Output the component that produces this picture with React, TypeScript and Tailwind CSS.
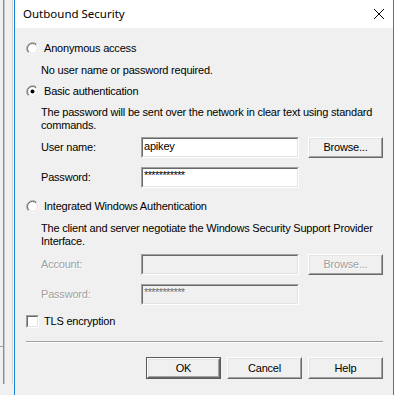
import type { ReactNode } from 'react';

const sans = "font-['Liberation_Sans',Arial,sans-serif]";
const disabledText = 'text-[#a0a0a0] [text-shadow:1px_1px_0_#fff]';

function RadioMark({ checked }: { checked?: boolean }) {
  return (
    <svg width="13" height="13" viewBox="0 0 13 13" className="shrink-0" aria-hidden>
      <circle cx="6.5" cy="6.5" r="4.6" fill="#fff" />
      <path d="M2.26 10.74A6 6 0 0 1 10.74 2.26" fill="none" stroke="#a0a0a0" />
      <path d="M10.74 2.26A6 6 0 0 1 2.26 10.74" fill="none" stroke="#fff" />
      <path d="M2.96 10.04A5 5 0 0 1 10.04 2.96" fill="none" stroke="#696969" />
      <path d="M10.04 2.96A5 5 0 0 1 2.96 10.04" fill="none" stroke="#e3e3e3" />
      {checked && <circle cx="6.5" cy="6.5" r="2" fill="#000" />}
    </svg>
  );
}

function Radio({ label, checked, className }: { label: string; checked?: boolean; className?: string }) {
  return (
    <div className={`flex h-[14px] items-center gap-[5px] ${className ?? ''}`}>
      <RadioMark checked={checked} />
      <span>{label}</span>
    </div>
  );
}

function CheckBox({ label, className }: { label: string; className?: string }) {
  return (
    <div className={`flex h-[14px] items-center gap-[5px] ${className ?? ''}`}>
      <span className="h-[13px] w-[13px] shrink-0 border border-t-[#a0a0a0] border-l-[#a0a0a0] border-r-white border-b-white">
        <span className="block h-full w-full border border-t-[#696969] border-l-[#696969] border-r-[#e3e3e3] border-b-[#e3e3e3] bg-white" />
      </span>
      <span>{label}</span>
    </div>
  );
}

function TextBox({
  value,
  disabled,
  password,
}: {
  value?: string;
  disabled?: boolean;
  password?: boolean;
}) {
  return (
    <div className="h-[21px] w-[158px] shrink-0 border border-t-[#a0a0a0] border-l-[#a0a0a0] border-r-white border-b-white">
      <div
        className={`h-full border border-t-[#696969] border-l-[#696969] border-r-[#e3e3e3] border-b-[#e3e3e3] pl-[1px] leading-[13px] ${
          disabled ? 'bg-[#f0f0f0] text-[#6d6d6d]' : 'bg-white text-black'
        } ${password ? 'pt-0 tracking-[-0.6px]' : 'pt-[1px]'}`}
      >
        {value}
      </div>
    </div>
  );
}

function Button({
  children,
  isDefault,
  disabled,
  className,
}: {
  children: ReactNode;
  isDefault?: boolean;
  disabled?: boolean;
  className?: string;
}) {
  return (
    <div className={`w-[75px] shrink-0 ${isDefault ? 'border border-[#5a5a5a]' : ''} ${className ?? ''}`}>
      <div className="h-full border border-t-white border-l-white border-r-[#696969] border-b-[#696969]">
        <div
          className={`flex h-full items-center justify-center border border-t-[#e3e3e3] border-l-[#e3e3e3] border-r-[#a0a0a0] border-b-[#a0a0a0] bg-[#f0f0f0] ${
            disabled ? disabledText : 'text-black'
          }`}
        >
          {children}
        </div>
      </div>
    </div>
  );
}

function FieldRow({
  label,
  disabled,
  className,
  children,
}: {
  label: string;
  disabled?: boolean;
  className?: string;
  children: ReactNode;
}) {
  return (
    <div className={`ml-[15px] flex h-[21px] items-center ${className ?? ''}`}>
      <span className={`w-[100px] shrink-0 ${disabled ? disabledText : ''}`}>{label}</span>
      {children}
    </div>
  );
}

export default function App() {
  return (
    <div
      className={`flex h-[395px] w-[403px] overflow-hidden bg-white text-[11px] tracking-[-0.2px] text-black ${sans}`}
    >
      {/* window behind the dialog */}
      <div className="flex w-[14px] shrink-0 flex-col bg-[#f0f0f0]">
        <div className="flex h-[384px]">
          <div className="flex w-[3px] flex-col">
            <div className="h-[346px]" />
            <div className="h-[1px] bg-[#a0a0a0]" />
          </div>
          <div className="w-[1px] bg-[#8c8c8c]" />
          <div className="w-[1px] bg-[#c8c8c8]" />
          <div className="w-[7px]" />
          <div className="w-[1px] bg-[#d2d2d2]" />
          <div className="w-[1px] bg-[#fafafa]" />
        </div>
      </div>

      <div className="flex w-[380px] shrink-0 flex-col border-x border-[#1883d7] bg-[#f0f0f0]">
        <div className="flex h-[28px] shrink-0 items-center justify-between bg-white pl-[8px] pr-[9px]">
          <span className="font-['Noto_Sans',sans-serif] text-[11.5px] tracking-normal text-black">
            Outbound Security
          </span>
          <svg width="10" height="10" viewBox="0 0 10 10" aria-hidden>
            <path d="M0 0L10 10M10 0L0 10" stroke="#000" strokeWidth="1" />
          </svg>
        </div>

        <div className="flex w-[368px] flex-col pl-[11px]">
          <Radio className="mt-[13px]" label="Anonymous access" />
          <p className="ml-[15px] mt-[9px] leading-[13px]">No user name or password required.</p>

          <Radio className="mt-[7px]" label="Basic authentication" checked />
          <p className="ml-[15px] mt-[8px] whitespace-nowrap leading-[13px]">
            The password will be sent over the network in clear text using standard
            <br />
            commands.
          </p>
          <FieldRow label="User name:" className="mt-[5px]">
            <TextBox value="apikey" />
            <Button className="ml-[9px] h-[21px]">Browse...</Button>
          </FieldRow>
          <FieldRow label="Password:" className="mt-[9px]">
            <TextBox value="***********" password />
          </FieldRow>

          <Radio className="mt-[11px]" label="Integrated Windows Authentication" />
          <p className="ml-[15px] mt-[9px] whitespace-nowrap leading-[13px]">
            The client and server negotiate the Windows Security Support Provider
            <br />
            Interface.
          </p>
          <FieldRow label="Account:" disabled className="mt-[6px]">
            <TextBox disabled />
            <Button disabled className="ml-[9px] h-[21px]">Browse...</Button>
          </FieldRow>
          <FieldRow label="Password:" disabled className="mt-[9px]">
            <TextBox value="***********" disabled password />
          </FieldRow>

          <CheckBox className="mt-[9px]" label="TLS encryption" />

          <div className="mt-[13px] h-[2px] w-[357px] border-t border-b border-t-[#a0a0a0] border-b-white" />

          <div className="mt-[14px] flex w-[357px] justify-end gap-[6px]">
            <Button isDefault className="h-[22px]">OK</Button>
            <Button className="h-[22px]">Cancel</Button>
            <Button className="h-[22px]">Help</Button>
          </div>
        </div>
      </div>

      <div className="w-[9px] shrink-0 bg-white" />
    </div>
  );
}
